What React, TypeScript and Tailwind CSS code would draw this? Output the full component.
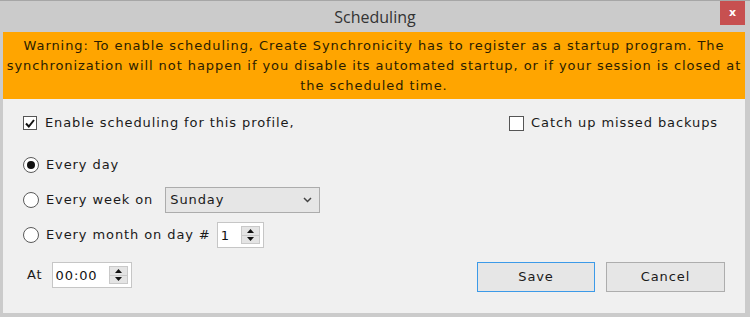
import React from 'react'

const font = { fontFamily: '"DejaVu Sans", Verdana, sans-serif' }

function Spinner({ value, width }: { value: string; width: string }) {
  return (
    <div className={`flex h-[26px] ${width} border border-[#c6c6c6] bg-white`}>
      <div className="flex-1 pl-[3px] pt-[3px] text-[13px] tracking-[0.9px] text-[#111]">{value}</div>
      <div className="my-[3px] mr-[3px] flex w-[19px] flex-col border border-[#c9c9c9] bg-[#e4e4e4]">
        <div className="flex flex-1 items-center justify-center border-b border-[#c9c9c9]">
          <svg width="7" height="4" viewBox="0 0 7 4"><path d="M0 4 L3.5 0 L7 4 Z" fill="#111" /></svg>
        </div>
        <div className="flex flex-1 items-center justify-center">
          <svg width="7" height="4" viewBox="0 0 7 4"><path d="M0 0 L3.5 4 L7 0 Z" fill="#111" /></svg>
        </div>
      </div>
    </div>
  )
}

function Radio({ checked, label }: { checked?: boolean; label: string }) {
  return (
    <div className="flex items-center">
      <div className="flex h-[16px] w-[16px] items-center justify-center rounded-full border border-[#5a5a5a] bg-white">
        {checked && <div className="h-[8px] w-[8px] rounded-full bg-[#111]" />}
      </div>
      <span className="ml-[7px]">{label}</span>
    </div>
  )
}

export default function App() {
  return (
    <div style={font} className="flex h-[317px] w-[750px] flex-col border-t border-[#a6a6a6] bg-[#cbcbcb]">
      <div className="relative flex h-[31px] items-center justify-center">
        <span style={{ fontFamily: '"Open Sans", "Noto Sans", sans-serif' }} className="text-[16px] text-[#333]">
          Scheduling
        </span>
        <div className="absolute right-[5px] top-0 flex h-[24px] w-[25px] items-center justify-center bg-[#c75050] text-[11px] font-bold text-white">
          x
        </div>
      </div>
      <div className="ml-[3px] mr-[5px] mb-[4px] flex flex-1 flex-col">
        <div className="flex h-[67px] flex-col items-center justify-center bg-[#ffa500] px-[2px] text-center text-[13px] leading-[20px] tracking-[0.93px] text-[#2b1d00]">
          <p className="whitespace-nowrap">Warning: To enable scheduling, Create Synchronicity has to register as a startup program. The</p>
          <p className="whitespace-nowrap">synchronization will not happen if you disable its automated startup, or if your session is closed at</p>
          <p className="whitespace-nowrap">the scheduled time.</p>
        </div>
        <div className="flex flex-1 flex-col bg-[#f0f0f0] pl-[20px] pr-[20px] pt-[16px] text-[13px] tracking-[0.9px] text-[#1a1a1a]">
          <div className="flex h-[16px] items-center justify-between pr-[7px]">
            <div className="flex items-center">
              <div className="flex h-[14px] w-[14px] items-center justify-center border border-[#555] bg-white">
                <svg width="10" height="9" viewBox="0 0 10 9">
                  <path d="M1 4.5 L3.8 7.5 L9 1" stroke="#111" strokeWidth="2" fill="none" />
                </svg>
              </div>
              <span className="ml-[8px]">Enable scheduling for this profile,</span>
            </div>
            <div className="flex items-center">
              <div className="h-[15px] w-[15px] border border-[#555] bg-white" />
              <span className="ml-[7px]">Catch up missed backups</span>
            </div>
          </div>
          <div className="mt-[24px] flex h-[20px] items-center">
            <Radio checked label="Every day" />
          </div>
          <div className="mt-[12px] flex h-[26px] items-center">
            <Radio label="Every week on" />
            <div className="ml-[12px] flex h-[26px] w-[155px] items-center justify-between border border-[#acacac] bg-[#e6e6e6] pl-[4px] pr-[7px]">
              <span>Sunday</span>
              <svg width="9" height="6" viewBox="0 0 9 6"><path d="M1 1 L4.5 4.5 L8 1" stroke="#444" strokeWidth="1.5" fill="none" /></svg>
            </div>
          </div>
          <div className="mt-[9px] flex h-[26px] items-center">
            <Radio label="Every month on day #" />
            <div className="ml-[6px]">
              <Spinner value="1" width="w-[47px]" />
            </div>
          </div>
          <div className="mt-[14px] flex items-start justify-between">
            <div className="flex h-[26px] items-center pl-[4px]">
              <span>At</span>
              <div className="ml-[9px]">
                <Spinner value="00:00" width="w-[80px]" />
              </div>
            </div>
            <div className="flex gap-[11px]">
              <button className="h-[30px] w-[118px] border border-[#3c9ae8] bg-[#e6e6e6] tracking-[0.9px] text-[#1a1a1a]">Save</button>
              <button className="h-[30px] w-[119px] border border-[#adadad] bg-[#e6e6e6] tracking-[0.9px] text-[#1a1a1a]">Cancel</button>
            </div>
          </div>
        </div>
      </div>
    </div>
  )
}
